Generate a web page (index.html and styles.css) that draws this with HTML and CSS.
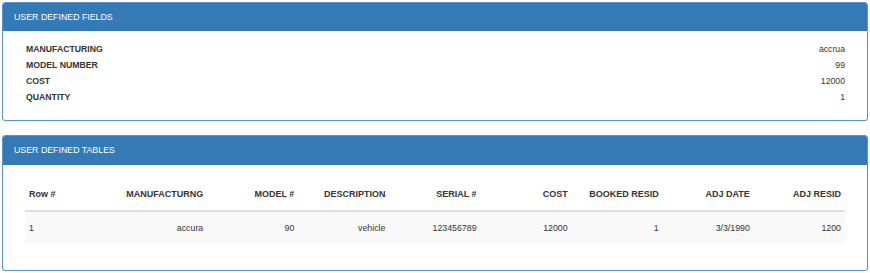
FILE: index.html
```html
<!DOCTYPE html>
<html>
<head>
<meta charset="utf-8">
<link rel="stylesheet" href="styles.css">
</head>
<body>
<div class="panel panel-fields">
  <div class="panel-heading">USER DEFINED FIELDS</div>
  <div class="panel-body fields">
    <div class="field"><span class="label">MANUFACTURING</span><span class="value">accrua</span></div>
    <div class="field"><span class="label">MODEL NUMBER</span><span class="value">99</span></div>
    <div class="field"><span class="label">COST</span><span class="value">12000</span></div>
    <div class="field"><span class="label">QUANTITY</span><span class="value">1</span></div>
  </div>
</div>
<div class="panel panel-tables">
  <div class="panel-heading">USER DEFINED TABLES</div>
  <div class="panel-body tables">
    <table class="grid">
      <thead>
        <tr>
          <th class="left">Row #</th>
          <th>MANUFACTURNG</th>
          <th>MODEL #</th>
          <th>DESCRIPTION</th>
          <th>SERIAL #</th>
          <th>COST</th>
          <th>BOOKED RESID</th>
          <th>ADJ DATE</th>
          <th>ADJ RESID</th>
        </tr>
      </thead>
      <tbody>
        <tr>
          <td class="left">1</td>
          <td>accura</td>
          <td>90</td>
          <td>vehicle</td>
          <td>123456789</td>
          <td>12000</td>
          <td>1</td>
          <td>3/3/1990</td>
          <td>1200</td>
        </tr>
      </tbody>
    </table>
  </div>
</div>
</body>
</html>
```
FILE: styles.css
```css
html, body {
  background: #fff;
}
body {
  margin: 2px 2px 0 2px;
  font-family: "Liberation Sans", Arial, sans-serif;
  color: #333;
}
.panel {
  border: 1px solid #5b93c8;
  border-radius: 3px;
  background: #fff;
  box-shadow: 0 1px 1px rgba(0, 0, 0, 0.06);
  overflow: hidden;
}
.panel-tables {
  margin-top: 14px;
}
.panel-heading {
  background: #337ab7;
  color: #fff;
  font-size: 8.8px;
  height: 28px;
  line-height: 28px;
  padding: 0 11px;
}
.panel-tables .panel-heading {
  height: 29px;
  line-height: 29px;
}
.fields {
  padding: 10px 22px 15px 23px;
  font-size: 8.7px;
}
.field {
  display: flex;
  justify-content: space-between;
  height: 16px;
  line-height: 16px;
}
.field .label {
  font-weight: bold;
}
.tables {
  padding: 13px 22px 26px 22px;
}
.grid {
  width: 100%;
  border-collapse: collapse;
  table-layout: fixed;
  font-size: 9px;
}
.grid th, .grid td {
  text-align: right;
  padding: 0 4px;
  height: 32px;
  white-space: nowrap;
}
.grid th {
  font-weight: bold;
  border-bottom: 2px solid #ddd;
}
.grid td {
  background: #f9f9f9;
  font-size: 8.8px;
}
.grid .left {
  text-align: left;
}
```
